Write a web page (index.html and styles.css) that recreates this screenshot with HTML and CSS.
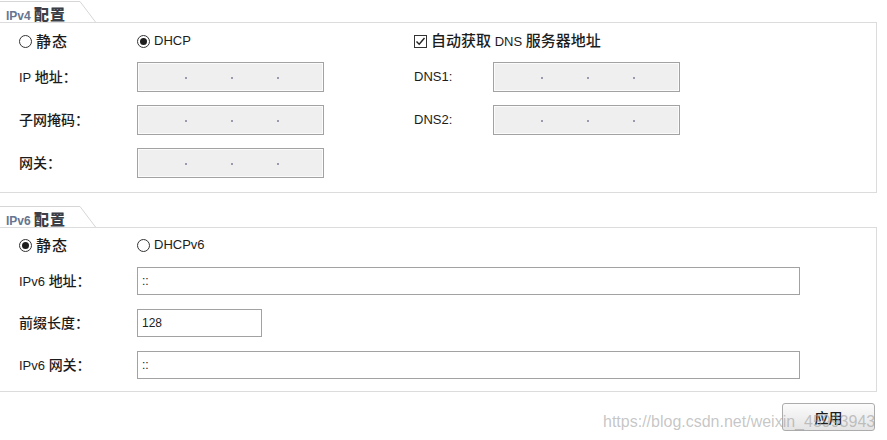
FILE: index.html
```html
<!DOCTYPE html>
<html lang="zh-CN">
<head>
<meta charset="utf-8">
<title>IP 配置</title>
<link rel="stylesheet" href="styles.css">
</head>
<body>
<div class="page">
  <section class="group">
    <div class="tab">
      <span class="tab-label"><span class="tab-en">IPv4</span> <span class="tab-zh">配置</span></span>
      <svg class="tab-slant" width="17" height="21" viewBox="0 0 17 21"><polyline points="0,0.5 1,0.5 16.5,21" fill="none" stroke="#d6d6d6" stroke-width="1"/></svg>
    </div>
    <div class="panel">
      <div class="grid4">
        <label class="opt"><span class="radio"></span><span class="zh wide-zh">静态</span></label>
        <label class="opt"><span class="radio on"></span><span>DHCP</span></label>
        <label class="opt span2"><span class="check"><svg width="11" height="11" viewBox="0 0 11 11"><polyline points="1.5,5.5 4.2,8.3 9.5,2" fill="none" stroke="#222" stroke-width="1.4"/></svg></span><span class="opt-text"><span class="zh">自动获取</span> DNS <span class="zh">服务器地址</span></span></label>

        <span class="lbl">IP <span class="zh">地址：</span></span>
        <div class="field ip"><i></i><i></i><i></i></div>
        <span class="lbl">DNS1:</span>
        <div class="field ip"><i></i><i></i><i></i></div>

        <span class="lbl"><span class="zh">子网掩码：</span></span>
        <div class="field ip"><i></i><i></i><i></i></div>
        <span class="lbl">DNS2:</span>
        <div class="field ip"><i></i><i></i><i></i></div>

        <span class="lbl"><span class="zh">网关：</span></span>
        <div class="field ip"><i></i><i></i><i></i></div>
      </div>
    </div>
  </section>

  <section class="group g6">
    <div class="tab">
      <span class="tab-label"><span class="tab-en">IPv6</span> <span class="tab-zh">配置</span></span>
      <svg class="tab-slant" width="17" height="21" viewBox="0 0 17 21"><polyline points="0,0.5 1,0.5 16.5,21" fill="none" stroke="#d6d6d6" stroke-width="1"/></svg>
    </div>
    <div class="panel p6">
      <div class="grid6">
        <label class="opt"><span class="radio on"></span><span class="zh wide-zh">静态</span></label>
        <label class="opt"><span class="radio"></span><span>DHCPv6</span></label>

        <span class="lbl">IPv6 <span class="zh">地址：</span></span>
        <div class="field txt wide">::</div>

        <span class="lbl"><span class="zh">前缀长度：</span></span>
        <div class="field txt short">128</div>

        <span class="lbl">IPv6 <span class="zh">网关：</span></span>
        <div class="field txt wide">::</div>
      </div>
    </div>
  </section>

  <div class="actions">
    <button class="btn" type="button">应用</button>
  </div>

  <div class="watermark">https://blog.csdn.net/weixin_45993943</div>
</div>
</body>
</html>
```

FILE: styles.css
```css
* { box-sizing: border-box; }

html, body {
  margin: 0;
  padding: 0;
  background: #ffffff;
}

body {
  font-family: "Liberation Sans", "Noto Sans CJK SC", sans-serif;
  font-size: 13px;
  color: #1c1c1c;
}

.page {
  position: relative;
  width: 887px;
  height: 440px;
  padding-top: 1px;
}

.group {
  width: 877px;
}

.g6 {
  margin-top: 13px;
}

.tab {
  display: flex;
  height: 21px;
}

.tab-label {
  width: 79px;
  height: 21px;
  border-top: 1px solid #d6d6d6;
  padding: 4px 0 0 6px;
  line-height: 16px;
  font-size: 12px;
  font-weight: bold;
  color: #3e4552;
  white-space: nowrap;
}

.tab-en {
  color: #66768f;
}

.tab-zh {
  font-family: "Noto Sans CJK SC", sans-serif;
  font-size: 15px;
  font-weight: 900;
  color: #3a3f48;
  letter-spacing: 1px;
}

.tab-slant {
  display: block;
}

.panel {
  border: 1px solid #dcdcdc;
  border-left: none;
  padding: 10px 0 14px 19px;
}

.p6 {
  padding: 9px 0 12px 19px;
}

.grid4 {
  display: grid;
  grid-template-columns: 118px 277px 79px 187px;
  grid-template-rows: 16px 30px 30px 30px;
  row-gap: 13px;
  align-items: center;
}

.grid6 {
  display: grid;
  grid-template-columns: 118px 663px;
  grid-template-rows: 16px 28px 28px 28px;
  row-gap: 14px;
  align-items: center;
}

.span2 {
  grid-column: span 2;
}

.zh {
  font-family: "Noto Sans CJK SC", sans-serif;
  font-size: 14px;
  font-weight: 500;
}

.wide-zh {
  font-size: 15px;
  letter-spacing: 1px;
}

.opt {
  display: flex;
  align-items: center;
  gap: 4px;
  line-height: 16px;
  white-space: nowrap;
}

.opt-text {
  white-space: nowrap;
  line-height: 16px;
}

.opt-text .zh {
  font-size: 15px;
}

.radio {
  width: 13px;
  height: 13px;
  border: 1px solid #333333;
  border-radius: 50%;
  background: #ffffff;
  display: flex;
  align-items: center;
  justify-content: center;
  flex: none;
}

.radio.on::after {
  content: "";
  width: 7px;
  height: 7px;
  border-radius: 50%;
  background: #1e1e1e;
}

.check {
  width: 13px;
  height: 13px;
  border: 1px solid #333333;
  background: #ffffff;
  display: flex;
  align-items: center;
  justify-content: center;
  flex: none;
}

.check svg {
  display: block;
}

.lbl {
  white-space: nowrap;
  line-height: 16px;
}

.field {
  height: 100%;
  border: 1px solid #a2a2a2;
}

.ip {
  width: 187px;
  background: #efefef;
  box-shadow: inset 0 0 0 1px #fbfbfb;
  display: flex;
  align-items: center;
  gap: 44px;
  padding: 2px 0 0 47px;
}

.ip i {
  display: block;
  width: 2px;
  height: 2px;
  border-radius: 50%;
  background: #7f7c98;
}

.txt {
  background: #ffffff;
  padding: 0 0 0 4px;
  font-size: 12px;
  line-height: 26px;
  color: #222;
}

.wide {
  width: 663px;
}

.short {
  width: 125px;
}

.actions {
  width: 877px;
  display: flex;
  justify-content: flex-end;
  padding-right: 2px;
  margin-top: 11px;
}

.btn {
  width: 93px;
  height: 28px;
  border: 1px solid #acacac;
  border-radius: 3px;
  background: linear-gradient(#fbfbfb, #e4e4e4);
  font-family: "Noto Sans CJK SC", sans-serif;
  font-size: 14px;
  font-weight: 500;
  color: #1c1c1c;
  padding: 0;
}

.watermark {
  position: absolute;
  left: 603px;
  top: 413px;
  font-family: "Liberation Sans", sans-serif;
  font-size: 16px;
  line-height: 18px;
  color: rgba(150, 150, 150, 0.55);
  white-space: nowrap;
  pointer-events: none;
}
```
